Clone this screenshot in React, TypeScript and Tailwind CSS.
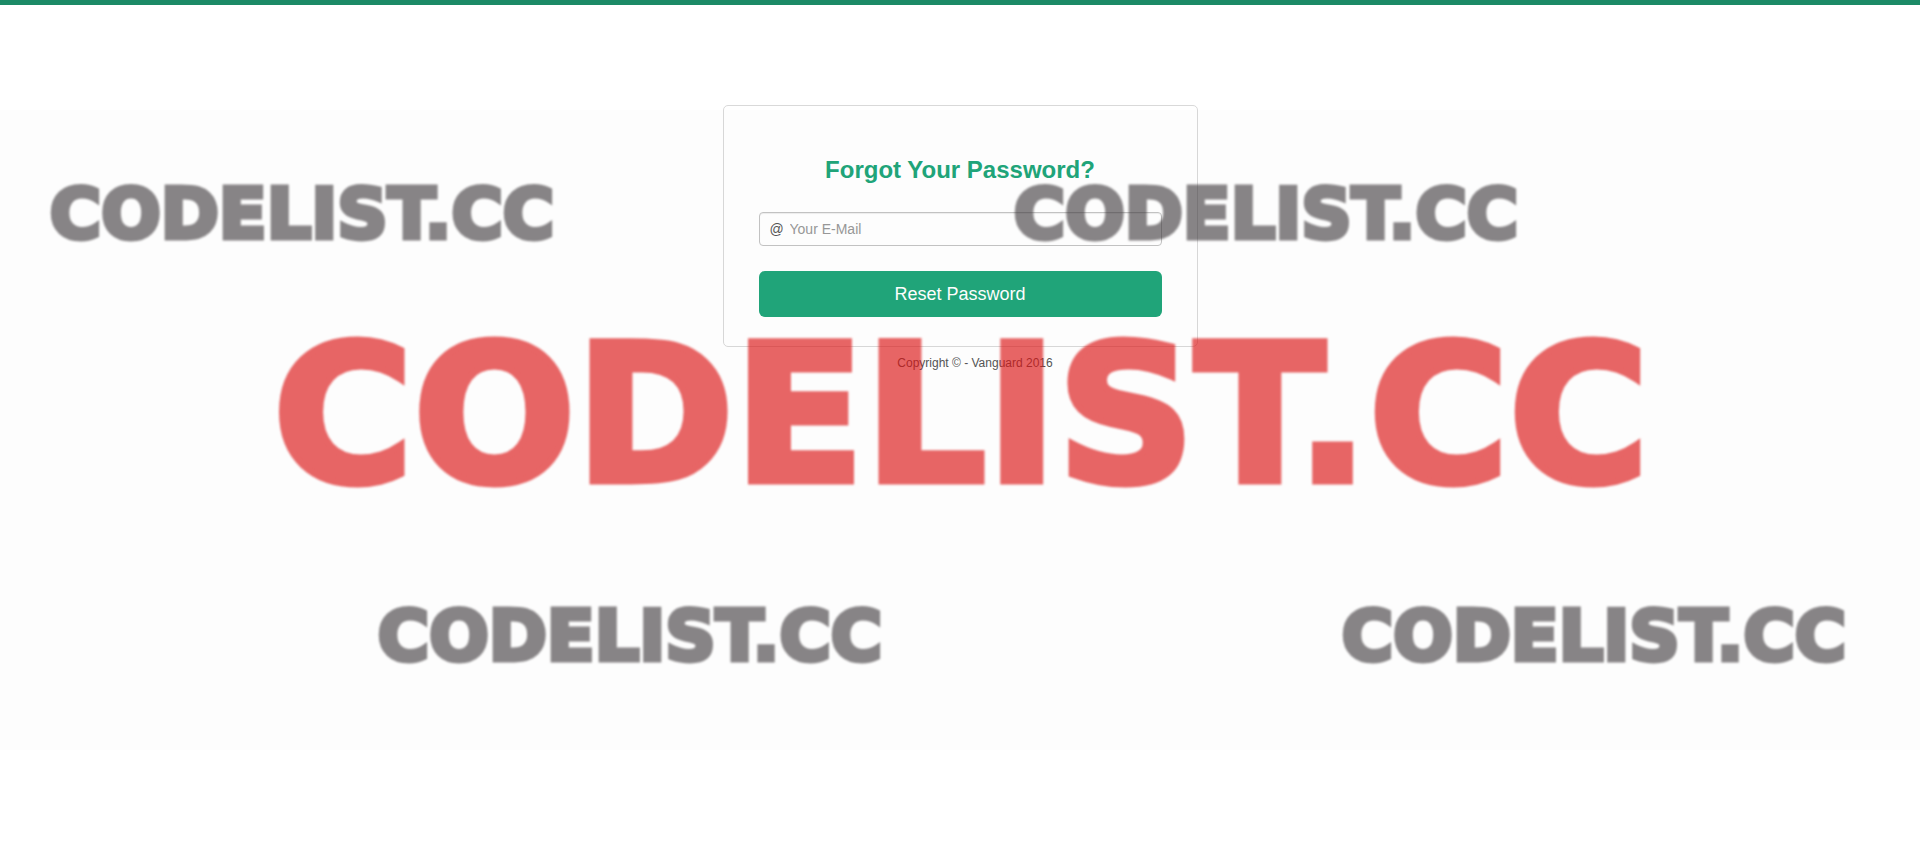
function Watermark() {
  return (
    <svg
      aria-hidden="true"
      viewBox="0 0 1920 640"
      className="pointer-events-none absolute inset-x-0 top-[105px] w-full bg-black/[0.008]"
    >
      <g
        className="blur-[1px]"
        fontFamily='"DejaVu Sans", sans-serif'
        fontWeight={700}
        textAnchor="middle"
      >
        <g fontSize={70} fill="#3a3537" stroke="#3a3537" strokeWidth={5} opacity={0.6}>
          <text x={302} y={128}>CODELIST.CC</text>
          <text x={1266} y={128}>CODELIST.CC</text>
          <text x={630} y={550}>CODELIST.CC</text>
          <text x={1594} y={550}>CODELIST.CC</text>
        </g>
        <g fontSize={191} fill="#dc1414" stroke="#dc1414" strokeWidth={7} opacity={0.65}>
          <text x={961} y={371}>CODELIST.CC</text>
        </g>
      </g>
    </svg>
  );
}

export default function App() {
  return (
    <div className="relative min-h-screen border-t-[5px] border-[#1c8a66] bg-white px-4 pt-[100px] font-['Liberation_Sans',Arial,sans-serif]">
      <main className="mx-auto max-w-[475px]">
        <form
          className="rounded-[5px] border border-[#d9d9d9] px-[35px] pt-12 pb-[29px]"
          onSubmit={(event) => event.preventDefault()}
        >
          <h1 className="text-center text-2xl font-bold text-[#21a67a]">Forgot Your Password?</h1>
          <div className="mt-[26px] flex h-[34px] items-center rounded border border-[#c4c4c4] px-[10px] text-sm shadow-[inset_0_1px_1px_rgba(0,0,0,0.07)]">
            <label htmlFor="email" aria-label="Your E-Mail" className="w-5 text-[#555]">
              @
            </label>
            <input
              id="email"
              type="email"
              placeholder="Your E-Mail"
              className="min-w-0 flex-1 bg-transparent text-[#555] outline-none placeholder:text-[#999]"
            />
          </div>
          <button
            type="submit"
            className="mt-[25px] h-[46px] w-full rounded-md bg-[#21a67a] text-lg text-white"
          >
            Reset Password
          </button>
        </form>
        <footer className="mt-2 pl-[30px] text-center text-xs leading-4 text-[#555]">
          Copyright © - Vanguard 2016
        </footer>
      </main>
      <Watermark />
    </div>
  );
}
